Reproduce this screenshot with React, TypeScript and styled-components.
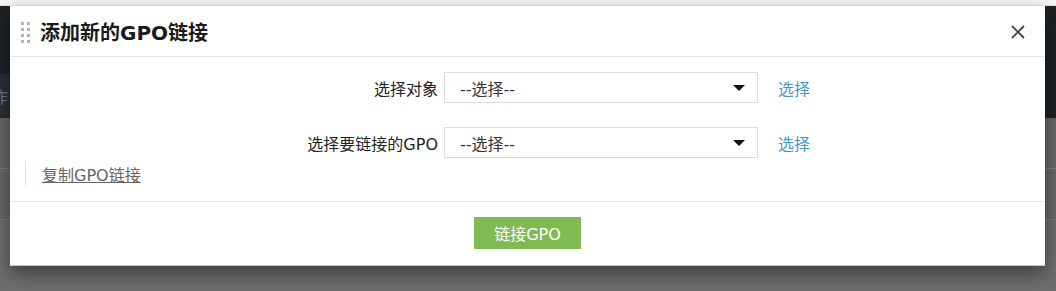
import React from 'react';
import styled, { createGlobalStyle } from 'styled-components';

const GlobalStyle = createGlobalStyle`
  html, body {
    margin: 0;
    padding: 0;
    width: 1056px;
    height: 291px;
    overflow: hidden;
    font-family: "DejaVu Sans", "Noto Sans CJK SC", sans-serif;
  }
`;

// page behind the overlay
const Page = styled.div`
  position: relative;
  width: 1056px;
  height: 291px;
  background: #6e6e6e;
  display: flex;
  flex-direction: column;
`;

const TopStrip = styled.div`
  height: 6px;
  background: #f4f4f4;
  border-bottom: 1px solid #e2e2e2;
  box-sizing: border-box;
`;

const NavBar = styled.div`
  height: 68px;
  background: #1e2226;
`;

const SubBar = styled.div`
  height: 44px;
  background: linear-gradient(to right, #2a3038 0, #2a3038 95%, #1e2226 95%);
  color: #777;
  font-size: 16px;
  display: flex;
  align-items: center;
  text-indent: -8px;
`;

const PageRow = styled.div`
  height: 50px;
  border-bottom: 1px solid #7c7c7c;
  background: #686868;
`;

const Modal = styled.div`
  position: absolute;
  left: 10px;
  top: 6px;
  width: 1035px;
  background: #fff;
  border-bottom: 1px solid #c8c8c8;
  box-shadow: 0 8px 18px rgba(0, 0, 0, 0.45);
  display: flex;
  flex-direction: column;
`;

const Header = styled.div`
  height: 50px;
  border-bottom: 1px solid #e5e5e5;
  display: flex;
  align-items: center;
  padding: 0 19px 0 11px;
`;

const Handle = styled.div`
  display: grid;
  grid-template-columns: repeat(2, 3px);
  grid-auto-rows: 3px;
  column-gap: 3px;
  row-gap: 3px;
  margin-right: 10px;
  margin-top: 2px;

  span {
    background: #b4b4b4;
  }
`;

const Title = styled.h2`
  margin: 0;
  font-size: 20px;
  font-weight: 700;
  color: #1a1a1a;
  flex: 1;
`;

const CloseButton = styled.button`
  border: none;
  background: none;
  padding: 0;
  width: 16px;
  height: 16px;
  cursor: pointer;
  display: flex;
  margin-top: 2px;
`;

const Body = styled.div`
  padding: 15px 0 15px 0;
`;

const Form = styled.div`
  display: grid;
  grid-template-columns: 428px 314px auto;
  column-gap: 6px;
  row-gap: 24px;
  align-items: center;
`;

const Label = styled.label`
  text-align: right;
  font-size: 16px;
  color: #222;
`;

const Select = styled.div`
  height: 31px;
  box-sizing: border-box;
  border: 1px solid #dcdcdc;
  display: flex;
  align-items: center;
  justify-content: space-between;
  padding: 0 12px 0 15px;
  font-size: 16px;
  color: #333;
`;

const Caret = styled.span`
  width: 0;
  height: 0;
  border-left: 6px solid transparent;
  border-right: 6px solid transparent;
  border-top: 6px solid #111;
`;

const PickLink = styled.a`
  font-size: 16px;
  color: #3f97c6;
  margin-left: 14px;
  cursor: pointer;
`;

const CopyRow = styled.div`
  margin: 3px 0 0 15px;
  height: 25px;
  border-left: 1px solid #dedede;
  display: flex;
  align-items: center;
  padding-left: 16px;
`;

const CopyLink = styled.a`
  font-size: 16px;
  color: #666;
  text-decoration: underline;
  cursor: pointer;
`;

const Footer = styled.div`
  border-top: 1px solid #e5e5e5;
  padding: 15px 0 16px;
  display: flex;
  justify-content: center;
`;

const PrimaryButton = styled.button`
  width: 107px;
  height: 32px;
  border: none;
  background: #7fba52;
  color: #fff;
  font-family: inherit;
  font-size: 16px;
  cursor: pointer;
`;

const rows = [
  { label: '选择对象' },
  { label: '选择要链接的GPO' },
];

const App: React.FC = () => {
  return (
    <>
      <GlobalStyle />
      <Page>
        <TopStrip />
        <NavBar />
        <SubBar>作</SubBar>
        <PageRow />
        <PageRow />
      </Page>

      <Modal>
        <Header>
          <Handle>
            {Array.from({ length: 8 }).map((_, i) => (
              <span key={i} />
            ))}
          </Handle>
          <Title>添加新的GPO链接</Title>
          <CloseButton aria-label="关闭">
            <svg width="16" height="16" viewBox="0 0 16 16">
              <path d="M2 2 L14 14 M14 2 L2 14" stroke="#444" strokeWidth="1.8" fill="none" />
            </svg>
          </CloseButton>
        </Header>

        <Body>
          <Form>
            {rows.map((r) => (
              <React.Fragment key={r.label}>
                <Label>{r.label}</Label>
                <Select>
                  <span>--选择--</span>
                  <Caret />
                </Select>
                <PickLink>选择</PickLink>
              </React.Fragment>
            ))}
          </Form>
          <CopyRow>
            <CopyLink>复制GPO链接</CopyLink>
          </CopyRow>
        </Body>

        <Footer>
          <PrimaryButton>链接GPO</PrimaryButton>
        </Footer>
      </Modal>
    </>
  );
};

export default App;
